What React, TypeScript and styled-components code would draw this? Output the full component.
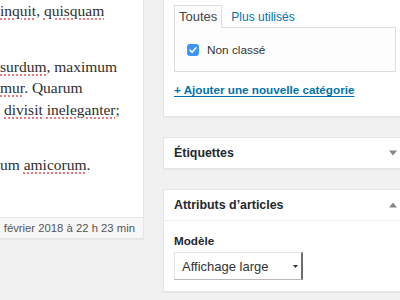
import React from "react";
import styled, { createGlobalStyle } from "styled-components";

const SANS = `"Liberation Sans", Arial, sans-serif`;
const SERIF = `"Liberation Serif", Georgia, serif`;
const LINK_COLOR = "#0073aa";

const GlobalStyle = createGlobalStyle`
  html, body {
    margin: 0;
    padding: 0;
    background: #f1f1f1;
    overflow: hidden;
  }
`;

interface EditorLine {
  indent?: number;
  gapBefore?: number;
  parts: { text: string; misspelled?: boolean }[];
}

const editorLines: EditorLine[] = [
  {
    parts: [
      { text: "inquit", misspelled: true },
      { text: ", " },
      { text: "quisquam", misspelled: true },
    ],
  },
  {
    gapBefore: 34,
    parts: [{ text: "surdum", misspelled: true }, { text: ", maximum" }],
  },
  {
    parts: [{ text: "mur", misspelled: true }, { text: ". Quarum" }],
  },
  {
    indent: 4,
    parts: [
      { text: "divisit", misspelled: true },
      { text: " " },
      { text: "ineleganter", misspelled: true },
      { text: ";" },
    ],
  },
  {
    gapBefore: 34,
    parts: [{ text: "um " }, { text: "amicorum", misspelled: true }, { text: "." }],
  },
];

const App: React.FunctionComponent = () => {
  return (
    <Page>
      <GlobalStyle />
      <EditorColumn>
        <EditorBody>
          {editorLines.map((line, i) => (
            <Line key={i} $indent={line.indent ?? 0} $gapBefore={line.gapBefore ?? 0}>
              {line.parts.map((part, j) =>
                part.misspelled ? (
                  <Misspelled key={j}>{part.text}</Misspelled>
                ) : (
                  <span key={j}>{part.text}</span>
                )
              )}
            </Line>
          ))}
        </EditorBody>
        <StatusBar>
          <span>Dernière modification par admin, le 21 février 2018 à 22 h 23 min</span>
        </StatusBar>
      </EditorColumn>

      <SideColumn>
        <CategoryBox>
          <Tabs>
            <Tab $active>Toutes</Tab>
            <Tab>Plus utilisés</Tab>
          </Tabs>
          <TabPanel>
            <CheckRow>
              <Checkbox>
                <svg width="10" height="10" viewBox="0 0 10 10">
                  <path
                    d="M2 5.2 L4.1 7.3 L8 2.8"
                    fill="none"
                    stroke="#fff"
                    strokeWidth="1.6"
                    strokeLinecap="round"
                    strokeLinejoin="round"
                  />
                </svg>
              </Checkbox>
              <CheckLabel>Non classé</CheckLabel>
            </CheckRow>
          </TabPanel>
          <AddLink href="#">+ Ajouter une nouvelle catégorie</AddLink>
        </CategoryBox>

        <Postbox>
          <PostboxHeader>
            <PostboxTitle>Étiquettes</PostboxTitle>
            <Toggle>
              <svg width="8" height="6" viewBox="0 0 8 6">
                <path d="M0 0.5 H8 L4 5.5 Z" fill="#82878c" />
              </svg>
            </Toggle>
          </PostboxHeader>
        </Postbox>

        <Postbox>
          <PostboxHeader $bordered>
            <PostboxTitle>Attributs d’articles</PostboxTitle>
            <Toggle>
              <svg width="8" height="6" viewBox="0 0 8 6">
                <path d="M0 5.5 H8 L4 0.5 Z" fill="#82878c" />
              </svg>
            </Toggle>
          </PostboxHeader>
          <PostboxInside>
            <FieldLabel>Modèle</FieldLabel>
            <Select>
              <span>Affichage large</span>
              <SelectArrow>
                <svg width="5" height="3" viewBox="0 0 5 3">
                  <path d="M0 0 H5 L2.5 3 Z" fill="#333" />
                </svg>
              </SelectArrow>
            </Select>
          </PostboxInside>
        </Postbox>
      </SideColumn>
    </Page>
  );
};

const Page = styled.div`
  display: flex;
  align-items: flex-start;
  width: 400px;
  height: 300px;
  overflow: hidden;
`;

const EditorColumn = styled.div`
  flex: 0 0 143px;
  display: flex;
  flex-direction: column;
  background: #fff;
  box-shadow: 0 1px 1px rgba(0, 0, 0, 0.04);
  border-right: 1px solid #e5e5e5;
  border-bottom: 1px solid #e5e5e5;
  overflow: hidden;
`;

const EditorBody = styled.div`
  height: 217px;
  font-family: ${SERIF};
  font-size: 15.5px;
  line-height: 21.5px;
  color: #2e2e2e;
`;

const Line = styled.div<{ $indent: number; $gapBefore: number }>`
  white-space: nowrap;
  padding-left: ${(p) => p.$indent}px;
  margin-top: ${(p) => p.$gapBefore}px;
`;

const Misspelled = styled.span`
  text-decoration: underline dotted #e0565b;
  text-underline-offset: 3px;
`;

const StatusBar = styled.div`
  display: flex;
  justify-content: flex-end;
  height: 20px;
  align-items: center;
  padding-right: 8px;
  background: #f7f7f7;
  border-top: 1px solid #e5e5e5;
  font-family: ${SANS};
  font-size: 11.3px;
  color: #555;
  white-space: nowrap;
`;

const SideColumn = styled.div`
  flex: 0 0 242px;
  margin-left: 19px;
  margin-top: -12px;
  display: flex;
  flex-direction: column;
  gap: 20px;
`;

const Postbox = styled.div`
  background: #fff;
  border: 1px solid #e5e5e5;
  box-shadow: 0 1px 1px rgba(0, 0, 0, 0.04);
  font-family: ${SANS};
`;

const CategoryBox = styled(Postbox)`
  padding: 16px 8px 18px 10px;
`;

const Tabs = styled.div`
  display: flex;
  align-items: flex-end;
`;

const Tab = styled.div<{ $active?: boolean }>`
  height: 23px;
  box-sizing: border-box;
  padding: 0 ${(p) => (p.$active ? 4 : 8)}px;
  display: flex;
  align-items: center;
  margin-bottom: -1px;
  font-size: ${(p) => (p.$active ? 13 : 12)}px;
  color: ${(p) => (p.$active ? "#444" : LINK_COLOR)};
  background: ${(p) => (p.$active ? "#fdfdfd" : "transparent")};
  border: 1px solid ${(p) => (p.$active ? "#ddd" : "transparent")};
  border-bottom-color: ${(p) => (p.$active ? "#fdfdfd" : "transparent")};
`;

const TabPanel = styled.div`
  height: 43px;
  background: #fdfdfd;
  border: 1px solid #ddd;
  display: flex;
  align-items: center;
  padding-left: 12px;
`;

const CheckRow = styled.label`
  display: flex;
  align-items: center;
  gap: 8px;
`;

const Checkbox = styled.span`
  width: 12px;
  height: 12px;
  border-radius: 3px;
  background: #3d95f5;
  display: flex;
  align-items: center;
  justify-content: center;
  margin-top: 1px;
`;

const CheckLabel = styled.span`
  font-size: 11.8px;
  color: #333;
`;

const AddLink = styled.a`
  display: inline-block;
  margin-top: 11px;
  font-size: 11.7px;
  font-weight: 600;
  color: ${LINK_COLOR};
  text-decoration: underline;
  text-underline-offset: 2px;
`;

const PostboxHeader = styled.div<{ $bordered?: boolean }>`
  height: 30px;
  display: flex;
  align-items: center;
  justify-content: space-between;
  padding: 0 7px 0 10px;
  border-bottom: ${(p) => (p.$bordered ? "1px solid #eee" : "none")};
`;

const PostboxTitle = styled.h2`
  margin: 0;
  font-size: 12.4px;
  font-weight: 700;
  color: #23282d;
`;

const Toggle = styled.span`
  display: flex;
  align-items: center;
`;

const PostboxInside = styled.div`
  padding: 13px 10px 11px;
`;

const FieldLabel = styled.div`
  font-size: 11.7px;
  font-weight: 600;
  color: #23282d;
  margin-bottom: 5px;
`;

const Select = styled.div`
  width: 129px;
  height: 28px;
  box-sizing: border-box;
  display: flex;
  align-items: center;
  justify-content: space-between;
  padding: 0 3px 0 7px;
  background: #fff;
  border: 1px solid #e2e2e2;
  border-right: 2px solid #6d6d6d;
  border-bottom: 1px solid #b8b8b8;
  font-size: 13px;
  color: #333;
`;

const SelectArrow = styled.span`
  display: flex;
  align-items: center;
`;

export default App;
